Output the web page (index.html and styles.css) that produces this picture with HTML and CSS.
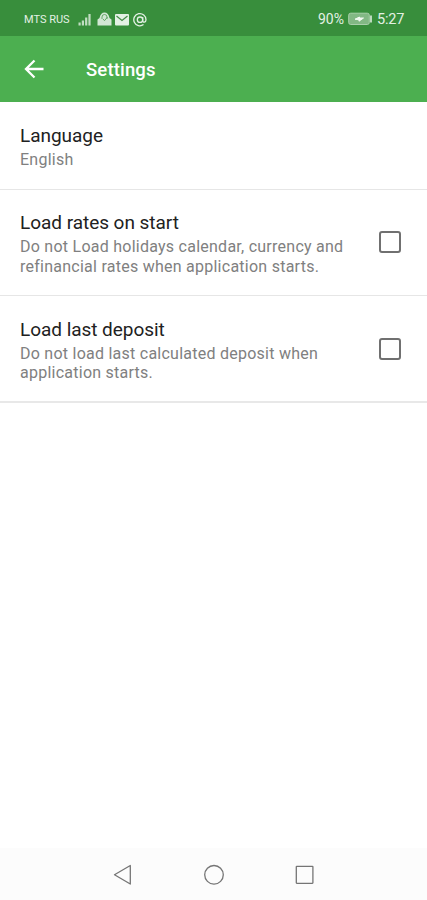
FILE: index.html
```html
<!DOCTYPE html>
<html lang="en">
<head>
<meta charset="utf-8">
<title>Settings</title>
<link rel="stylesheet" href="styles.css">
</head>
<body>
<div class="screen">
  <div class="status">
    <span class="carrier">MTS RUS</span>
    <svg class="status-icons" width="70" height="16" viewBox="0 0 70 16" fill="#e3f1e4">
      <path d="M.5 11.500h2.200v3H.5zM3.800 9.500H6v5H3.800zM7.100 6.500h2.200v8H7.100zM10.400 3h2.200v11.500h-2.200z" opacity=".8"/>
      <path d="M19.500 14.500V8.500L21.500 7C22 3.500 24 1.500 26.500 1.500S31 3.500 31.500 7l2 1.500v6z" opacity=".9"/>
      <path d="M24 8V6a2.500 2.500 0 0 1 5 0v2M25 8l1.500 1.700L29.500 6" fill="none" stroke="#5b9f5e" stroke-width=".9"/>
      <rect x="37" y="3" width="14" height="11.500" rx="1"/>
      <path d="M38.500 5l5.500 4.500L49.500 5" fill="none" stroke="#438b46" stroke-width="1.200"/>
      <g fill="none" stroke="#e3f1e4" stroke-width="1.300">
        <circle cx="62" cy="8.700" r="2.700"/>
        <path d="M64.700 6v3.700c0 2.200 3.300 1.800 3.300-1A6.100 6.100 0 1 0 65.500 13.600"/>
      </g>
    </svg>
    <span class="percent">90%</span>
    <svg class="battery" width="25" height="14" viewBox="0 0 25 14">
      <rect x=".7" y="1.200" width="20.600" height="11.300" rx="2" fill="#82b884" stroke="#a9cfaa"/>
      <path d="M7 7.200L11.500 5V6h4L11 9.200V7.800z" fill="#f1f8f1" stroke="#f1f8f1" stroke-width="1"/>
      <path d="M23 3.500v7" stroke="#d5e8d6" stroke-width="1.700"/>
    </svg>
    <span class="clock">5:27</span>
  </div>
  <header class="appbar">
    <svg width="20" height="20" viewBox="0 0 20 20" fill="none" stroke="#fff" stroke-width="2.300"><path d="M10.500 1.500L2 10l8.500 8.500M2 10h17.500"/></svg>
    <h1>Settings</h1>
  </header>
  <main>
    <section class="row language">
      <div><h2>Language</h2><p>English</p></div>
    </section>
    <section class="row">
      <div><h2>Load rates on start</h2><p>Do not Load holidays calendar, currency and<br>refinancial rates when application starts.</p></div>
      <span class="check"></span>
    </section>
    <section class="row last">
      <div><h2>Load last deposit</h2><p>Do not load last calculated deposit when<br>application starts.</p></div>
      <span class="check"></span>
    </section>
  </main>
  <nav class="navbar">
    <svg width="427" height="52" viewBox="0 0 427 52" fill="none" stroke="#757575" stroke-width="1.300">
      <path d="M114.500 26.700L130.300 17.500v18.500z" stroke-linejoin="round"/>
      <circle cx="214" cy="26.800" r="9.300"/>
      <rect x="296.300" y="18.300" width="16.600" height="17" rx=".5"/>
    </svg>
  </nav>
</div>
</body>
</html>
```
FILE: styles.css
```css
* { box-sizing: border-box; }
body { margin: 0; font-family: Roboto, sans-serif; background: #fff; }
h1, h2, p { margin: 0; font-weight: 400; white-space: nowrap; }
svg { display: block; flex: none; }
.screen { width: 427px; height: 900px; display: flex; flex-direction: column; overflow: hidden; }
.status { height: 36px; flex: none; background: #388e3c; color: #e3f1e4; display: flex; align-items: center; padding: 2px 0 0 24px; }
.carrier { width: 54px; font-size: 11px; white-space: nowrap; }
.percent { margin-left: 170px; width: 30px; font-size: 14px; }
.battery { width: 25px; }
.clock { margin-left: 4px; font-size: 14.500px; letter-spacing: -0.200px; }
.appbar { height: 66px; flex: none; background: #4caf50; color: #fff; display: flex; align-items: center; padding: 2px 0 0 24px; }
.appbar h1 { margin-left: 42px; font-size: 18.500px; font-weight: 500; line-height: 24px; letter-spacing: 0.150px; }
.appbar svg { margin-top: -2px; }
main { flex: 1; }
.row { height: 106px; padding: 21px 26px 0 20px; border-bottom: 1px solid #e6e6e6; display: flex; justify-content: space-between; }
.language { height: 88px; padding-top: 22px; }
.last { height: 107px; padding-top: 22px; border-bottom: 2px solid #e8e8e8; }
.row h2 { font-size: 19px; line-height: 24px; color: #212121; letter-spacing: -0.040px; }
.row p { font-size: 16px; line-height: 19.500px; margin-top: 2px; color: #808080; letter-spacing: 0.250px; }
.last p { line-height: 19px; }
.check { width: 22px; height: 22px; margin-top: 20px; border: 2px solid #707070; border-radius: 3px; flex: none; }
.navbar { height: 52px; flex: none; background: #fcfcfc; }
```
